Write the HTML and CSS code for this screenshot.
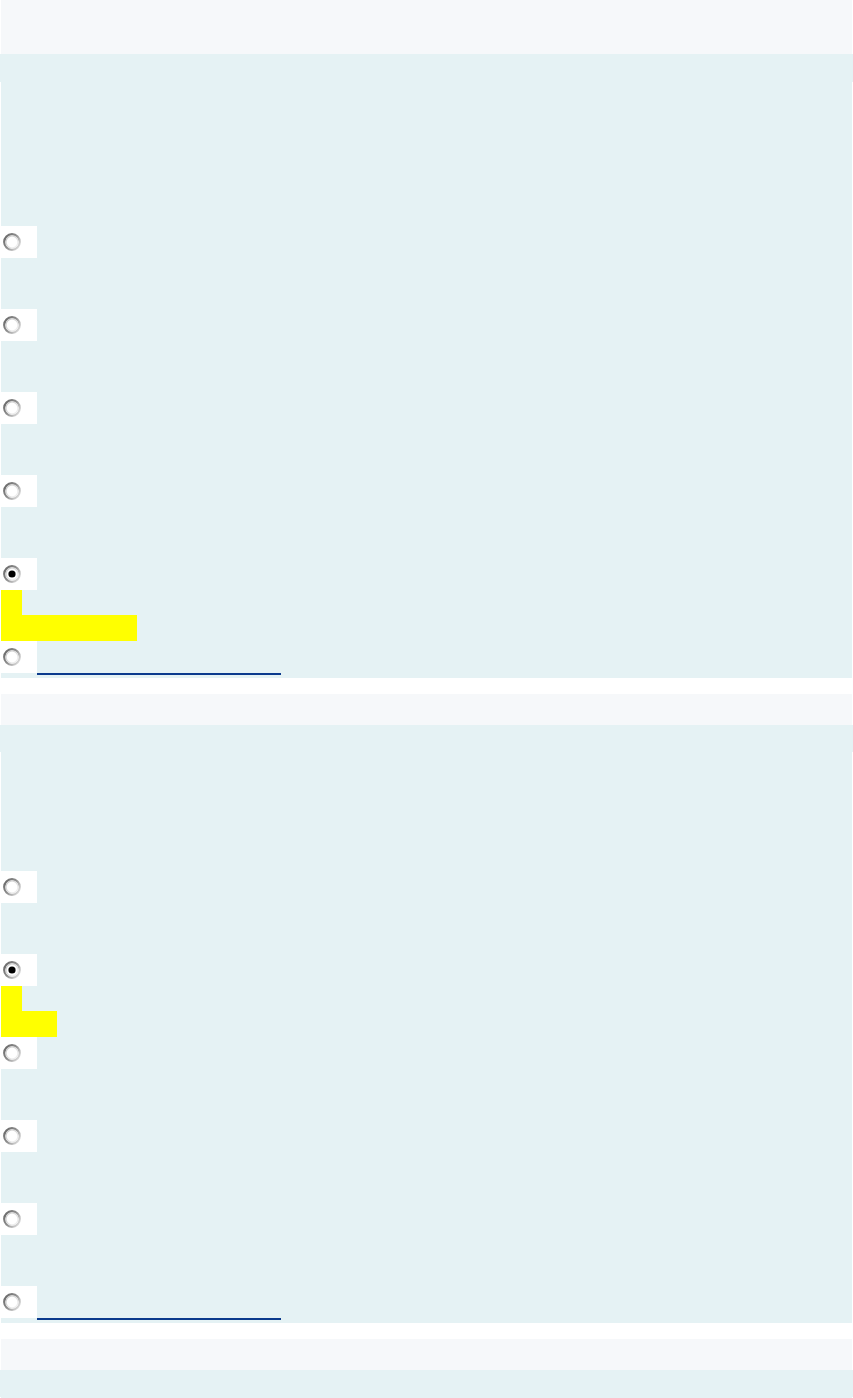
FILE: index.html
```html
<!DOCTYPE html>
<html lang="en">
<head>
    <meta charset="UTF-8">
    <meta name="viewport" content="width=device-width, initial-scale=1.0">
    <title>Quiz review</title>
    <link rel="stylesheet" href="styles.css">
</head>
<body>
    <div class="page">
        <!-- Вопрос 1 -->
        <div class="que">
            <div class="que-head tall"></div>
            <div class="que-body">
                <div class="qtext"></div>
                <div class="prompt tall"></div>
                <div class="answers">
                    <div class="option">
                        <span class="radio-cell"><svg class="radio" viewBox="0 0 18 18"><use href="#radio-off"/></svg></span>
                        <div class="label"></div>
                    </div>
                    <div class="option">
                        <span class="radio-cell"><svg class="radio" viewBox="0 0 18 18"><use href="#radio-off"/></svg></span>
                        <div class="label"></div>
                    </div>
                    <div class="option">
                        <span class="radio-cell"><svg class="radio" viewBox="0 0 18 18"><use href="#radio-off"/></svg></span>
                        <div class="label"></div>
                    </div>
                    <div class="option">
                        <span class="radio-cell"><svg class="radio" viewBox="0 0 18 18"><use href="#radio-off"/></svg></span>
                        <div class="label"></div>
                    </div>
                    <div class="option">
                        <span class="radio-cell"><svg class="radio" viewBox="0 0 18 18"><use href="#radio-on"/></svg></span>
                        <div class="label">
                            <div class="line"><span class="mark" style="width: 21px"></span></div>
                            <div class="line second"><span class="mark" style="width: 136px"></span></div>
                        </div>
                    </div>
                    <div class="option last">
                        <span class="radio-cell"><svg class="radio" viewBox="0 0 18 18"><use href="#radio-off"/></svg></span>
                        <a class="more-link" href="#"></a>
                    </div>
                </div>
            </div>
        </div>

        <!-- Вопрос 2 -->
        <div class="que">
            <div class="que-head"></div>
            <div class="que-body">
                <div class="qtext short"></div>
                <div class="prompt"></div>
                <div class="answers">
                    <div class="option">
                        <span class="radio-cell"><svg class="radio" viewBox="0 0 18 18"><use href="#radio-off"/></svg></span>
                        <div class="label"></div>
                    </div>
                    <div class="option">
                        <span class="radio-cell"><svg class="radio" viewBox="0 0 18 18"><use href="#radio-on"/></svg></span>
                        <div class="label">
                            <div class="line"><span class="mark" style="width: 21px"></span></div>
                            <div class="line second"><span class="mark" style="width: 56px"></span></div>
                        </div>
                    </div>
                    <div class="option">
                        <span class="radio-cell"><svg class="radio" viewBox="0 0 18 18"><use href="#radio-off"/></svg></span>
                        <div class="label"></div>
                    </div>
                    <div class="option">
                        <span class="radio-cell"><svg class="radio" viewBox="0 0 18 18"><use href="#radio-off"/></svg></span>
                        <div class="label"></div>
                    </div>
                    <div class="option">
                        <span class="radio-cell"><svg class="radio" viewBox="0 0 18 18"><use href="#radio-off"/></svg></span>
                        <div class="label"></div>
                    </div>
                    <div class="option last">
                        <span class="radio-cell"><svg class="radio" viewBox="0 0 18 18"><use href="#radio-off"/></svg></span>
                        <a class="more-link" href="#"></a>
                    </div>
                </div>
            </div>
        </div>

        <!-- Вопрос 3 -->
        <div class="que">
            <div class="que-head"></div>
            <div class="que-body">
                <div class="qtext short"></div>
                <div class="prompt"></div>
            </div>
        </div>
    </div>

    <svg class="defs" width="0" height="0" aria-hidden="true">
        <defs>
            <linearGradient id="ring-outer" x1="0" y1="0.2" x2="1" y2="0.9">
                <stop offset="0" stop-color="#6a6a6a"/>
                <stop offset="0.45" stop-color="#8f8f8f"/>
                <stop offset="1" stop-color="#e4e4e4"/>
            </linearGradient>
            <linearGradient id="ring-inner" x1="0" y1="0" x2="1" y2="1">
                <stop offset="0" stop-color="#c4c4c4"/>
                <stop offset="1" stop-color="#f6f6f6"/>
            </linearGradient>
            <g id="radio-off">
                <circle cx="9" cy="9" r="7.8" fill="#fff" stroke="url(#ring-outer)" stroke-width="2.2"/>
                <circle cx="9" cy="9" r="6" fill="none" stroke="url(#ring-inner)" stroke-width="1.2"/>
            </g>
            <g id="radio-on">
                <use href="#radio-off"/>
                <circle cx="9" cy="9" r="3.6" fill="#000"/>
            </g>
        </defs>
    </svg>
</body>
</html>
```

FILE: styles.css
```css
body {
    font-family: 'Liberation Sans', Arial, sans-serif;
    font-size: 13px;
    background-color: #ffffff;
    margin: 0;
    padding: 0;
}
.page {
    display: flex;
    flex-direction: column;
    gap: 16px;
}
.que-head {
    height: 31px;
    margin: 0 1px;
    background-color: #f6f8fa;
}
.que-head.tall {
    height: 54px;
}
.que-body {
    background-color: #e5f2f4;
    margin: 0 1px;
    padding-bottom: 3px;
}
.qtext {
    height: 28px;
    margin: 0 -1px;
    background-color: #e5f2f4;
}
.qtext.short {
    height: 27px;
}
.prompt {
    height: 119px;
}
.prompt.tall {
    height: 144px;
}
.radio-cell {
    display: flex;
    align-items: center;
    width: 36px;
    height: 32px;
    padding-left: 2px;
    box-sizing: border-box;
    background-color: #ffffff;
}
.radio {
    width: 18px;
    height: 18px;
    display: block;
}
.label {
    height: 51px;
}
.line {
    height: 25px;
}
.line.second {
    height: 26px;
}
.mark {
    display: block;
    height: 100%;
    background-color: #ffff00;
}
.option.last {
    display: flex;
    align-items: flex-start;
}
.more-link {
    display: block;
    width: 244px;
    height: 32px;
    border-bottom: 2px solid #0b3a8c;
}
.defs {
    position: absolute;
}
```
